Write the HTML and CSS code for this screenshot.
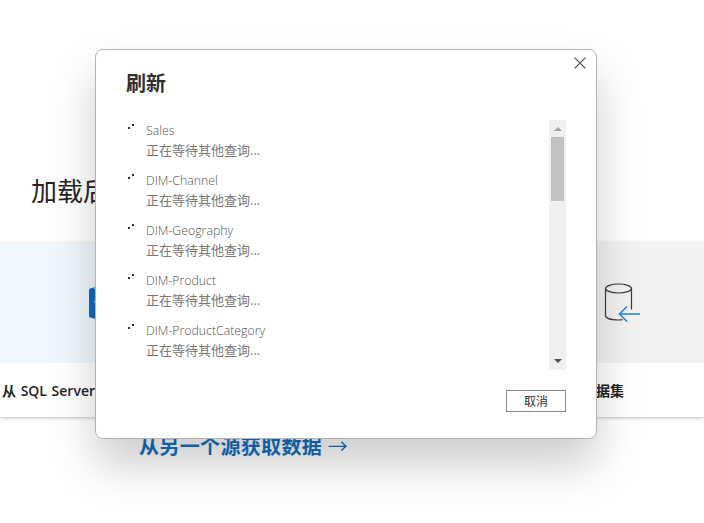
FILE: index.html
```html
<!DOCTYPE html>
<html lang="zh">
<head>
<meta charset="utf-8"/>
<meta content="width=device-width, initial-scale=1.0" name="viewport"/>
<title>刷新</title>
<link rel="stylesheet" href="styles.css">
</head>
<body>
<main class="page">
  <h1 class="page-title">加载后</h1>
  <div class="cards">
    <div class="card card-blue">
      <div class="card-band">
        <svg class="card-icon" width="40" height="34" viewBox="0 0 40 34">
          <path d="M0 4c0-5 40-5 40 0v26c0 5-40 5-40 0z" fill="#0f6cbd"/>
          <ellipse cx="20" cy="2" rx="16" ry="2.500" fill="#50c0e0"/>
          <path d="M10 14c-2-1-4 0-4 2s4 2 4 4-2 3-4 2" fill="none" stroke="#ffffff" stroke-width="1.300"/>
        </svg>
      </div>
      <div class="card-label">从 SQL Server</div>
    </div>
    <div class="card card-grey">
      <div class="card-band"></div>
      <div class="card-label"></div>
    </div>
    <div class="card card-grey">
      <div class="card-band card-band-end">
        <svg class="card-icon" width="40" height="40" viewBox="0 0 40 40">
          <ellipse cx="18.500" cy="5.500" rx="13" ry="4.500" fill="none" stroke="#3b3a39" stroke-width="1.200"/>
          <path d="M5.500 5.500v27c0 2.500 5 4.500 13 4.500 1.500 0 3-.1 4-.3M31.500 5.500v21" fill="none" stroke="#3b3a39" stroke-width="1.200"/>
          <path d="M40 31H19.500M27 23.500L19.500 31l7.500 7.500" fill="none" stroke="#1f86c9" stroke-width="1.500"/>
        </svg>
      </div>
      <div class="card-label card-label-end">数据集</div>
    </div>
  </div>
  <a class="other-source" href="#">从另一个源获取数据 <span class="other-arrow">→</span></a>
</main>

<div class="dialog">
  <button class="dialog-close" aria-label="关闭">
    <svg width="12" height="12" viewBox="0 0 12 12">
      <path d="M.5.5l11 11M11.500.5l-11 11" fill="none" stroke="#605e5c" stroke-width="1.100"/>
    </svg>
  </button>
  <h2 class="dialog-title">刷新</h2>
  <div class="dialog-body">
    <ul class="query-list">
      <li class="query"><span class="spinner"></span><div><div class="query-name">Sales</div><div class="query-status">正在等待其他查询...</div></div></li>
      <li class="query"><span class="spinner"></span><div><div class="query-name">DIM-Channel</div><div class="query-status">正在等待其他查询...</div></div></li>
      <li class="query"><span class="spinner"></span><div><div class="query-name">DIM-Geography</div><div class="query-status">正在等待其他查询...</div></div></li>
      <li class="query"><span class="spinner"></span><div><div class="query-name">DIM-Product</div><div class="query-status">正在等待其他查询...</div></div></li>
      <li class="query"><span class="spinner"></span><div><div class="query-name">DIM-ProductCategory</div><div class="query-status">正在等待其他查询...</div></div></li>
    </ul>
    <div class="scrollbar">
      <span class="arrow-up"></span>
      <span class="thumb"></span>
      <span class="arrow-down"></span>
    </div>
  </div>
  <div class="dialog-footer">
    <button class="cancel">取消</button>
  </div>
</div>
</body>
</html>
```

FILE: styles.css
```css
html, body {
  margin: 0;
  height: 100%;
  overflow: hidden;
  background: #ffffff;
  font-family: "Open Sans", "Noto Sans CJK SC", sans-serif;
}
.page {
  padding-top: 173px;
}
.page-title {
  margin: 0 0 33px 31px;
  font-size: 26px;
  line-height: 36px;
  font-weight: 400;
  color: #252423;
  white-space: nowrap;
}
.cards {
  display: grid;
  grid-template-columns: 218px 1fr 218px;
  height: 175px;
  box-shadow: 0 1px 3px rgba(0, 0, 0, 0.25);
}
.card-band {
  height: 121px;
  display: flex;
  align-items: center;
  padding-left: 89px;
  box-sizing: border-box;
}
.card-band-end {
  justify-content: flex-end;
  padding: 0 64px 0 0;
}
.card-blue .card-band {
  background: #eff6fc;
}
.card-grey .card-band {
  background: #f3f2f1;
}
.card-label {
  height: 54px;
  line-height: 56px;
  padding-left: 2px;
  font-size: 14px;
  font-weight: 600;
  word-spacing: 1px;
  color: #252423;
  white-space: nowrap;
}
.card-label-end {
  text-align: right;
  padding-right: 80px;
}
.other-source {
  display: block;
  margin: 16px 0 0 139px;
  font-size: 20px;
  line-height: 28px;
  font-weight: 700;
  letter-spacing: 0.35px;
  color: #1170c4;
  text-decoration: none;
}
.other-arrow {
  font-weight: 400;
}
.dialog {
  position: absolute;
  top: 49px;
  left: 95px;
  width: 500px;
  height: 388px;
  background: #ffffff;
  border: 1px solid #b3b3b3;
  border-radius: 8px;
  box-shadow: 0 26px 46px rgba(0, 0, 0, 0.2);
}
.dialog-close {
  position: absolute;
  top: 7px;
  right: 10px;
  padding: 0;
  border: none;
  background: none;
  line-height: 0;
}
.dialog-title {
  margin: 20px 0 0 30px;
  font-size: 20px;
  line-height: 28px;
  font-weight: 700;
  color: #323130;
}
.dialog-body {
  display: flex;
  margin: 22px 30px 0 30px;
  height: 250px;
}
.query-list {
  flex: 1;
  margin: 0;
  padding: 1px 0 0;
  list-style: none;
  overflow: hidden;
}
.query {
  display: flex;
  gap: 12px;
  height: 50px;
}
.spinner {
  width: 8px;
  height: 8px;
  flex: none;
  margin-top: 3px;
  background:
    linear-gradient(#323130, #323130) 6px 0 / 2px 2px no-repeat,
    linear-gradient(#323130, #323130) 2px 3px / 2px 2px no-repeat;
}
.query-name {
  font-size: 12.300px;
  line-height: 20px;
  margin-bottom: -1px;
  font-weight: 300;
  color: #55534f;
}
.query-status {
  font-size: 13px;
  line-height: 20px;
  color: #7a7876;
}
.scrollbar {
  width: 17px;
  display: flex;
  flex-direction: column;
  align-items: center;
  background: #f0f0f0;
}
.arrow-up {
  margin-top: 7px;
  border-left: 4px solid transparent;
  border-right: 4px solid transparent;
  border-bottom: 4px solid #a3a3a3;
}
.thumb {
  width: 13px;
  height: 64px;
  margin-top: 6px;
  background: #c1c1c1;
}
.arrow-down {
  margin-top: auto;
  margin-bottom: 7px;
  border-left: 4px solid transparent;
  border-right: 4px solid transparent;
  border-top: 4px solid #505050;
}
.dialog-footer {
  display: flex;
  justify-content: flex-end;
  margin: 20px 30px 0 0;
}
.cancel {
  width: 60px;
  height: 22px;
  padding: 0;
  background: #ffffff;
  border: 1px solid #8a8886;
  font-family: inherit;
  font-size: 12px;
  color: #323130;
}
```
